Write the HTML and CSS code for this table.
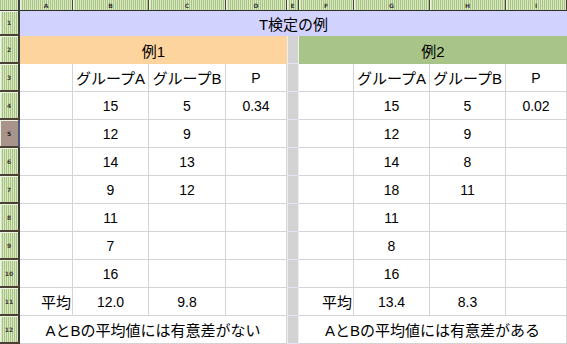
FILE: index.html
```html
<!DOCTYPE html>
<html lang="ja">
<head>
<meta charset="utf-8">
<title>T検定の例</title>
<link rel="stylesheet" href="styles.css">
</head>
<body>
<div class="sheet">
  <div class="corner"></div>
  <div class="ch">A</div><div class="ch">B</div><div class="ch">C</div><div class="ch">D</div><div class="ch ch-e">E</div><div class="ch">F</div><div class="ch">G</div><div class="ch">H</div><div class="ch">I</div>

  <div class="rh">1</div>
  <div class="cell title span9">T検定の例</div>

  <div class="rh">2</div>
  <div class="cell ex1 span4">例1</div>
  <div class="e"></div>
  <div class="cell ex2 span4">例2</div>

  <div class="rh">3</div>
  <div class="cell"></div><div class="cell jp">グループA</div><div class="cell jp">グループB</div><div class="cell">P</div>
  <div class="e"></div>
  <div class="cell"></div><div class="cell jp">グループA</div><div class="cell jp">グループB</div><div class="cell">P</div>

  <div class="rh">4</div>
  <div class="cell"></div><div class="cell">15</div><div class="cell">5</div><div class="cell">0.34</div>
  <div class="e"></div>
  <div class="cell"></div><div class="cell">15</div><div class="cell">5</div><div class="cell">0.02</div>

  <div class="rh rh-sel">5</div>
  <div class="cell"></div><div class="cell">12</div><div class="cell">9</div><div class="cell"></div>
  <div class="e"></div>
  <div class="cell"></div><div class="cell">12</div><div class="cell">9</div><div class="cell"></div>

  <div class="rh">6</div>
  <div class="cell"></div><div class="cell">14</div><div class="cell">13</div><div class="cell"></div>
  <div class="e"></div>
  <div class="cell"></div><div class="cell">14</div><div class="cell">8</div><div class="cell"></div>

  <div class="rh">7</div>
  <div class="cell"></div><div class="cell">9</div><div class="cell">12</div><div class="cell"></div>
  <div class="e"></div>
  <div class="cell"></div><div class="cell">18</div><div class="cell">11</div><div class="cell"></div>

  <div class="rh">8</div>
  <div class="cell"></div><div class="cell">11</div><div class="cell"></div><div class="cell"></div>
  <div class="e"></div>
  <div class="cell"></div><div class="cell">11</div><div class="cell"></div><div class="cell"></div>

  <div class="rh">9</div>
  <div class="cell"></div><div class="cell">7</div><div class="cell"></div><div class="cell"></div>
  <div class="e"></div>
  <div class="cell"></div><div class="cell">8</div><div class="cell"></div><div class="cell"></div>

  <div class="rh">10</div>
  <div class="cell"></div><div class="cell">16</div><div class="cell"></div><div class="cell"></div>
  <div class="e"></div>
  <div class="cell"></div><div class="cell">16</div><div class="cell"></div><div class="cell"></div>

  <div class="rh">11</div>
  <div class="cell jp right">平均</div><div class="cell">12.0</div><div class="cell">9.8</div><div class="cell"></div>
  <div class="e"></div>
  <div class="cell jp right">平均</div><div class="cell">13.4</div><div class="cell">8.3</div><div class="cell"></div>

  <div class="rh">12</div>
  <div class="cell jp span4">AとBの平均値には有意差がない</div>
  <div class="e"></div>
  <div class="cell jp span4">AとBの平均値には有意差がある</div>
</div>
</body>
</html>
```
FILE: styles.css
```css
html, body {
  margin: 0;
  padding: 0;
  background: #ffffff;
}

.sheet {
  display: grid;
  grid-template-columns: 20px 53px 76px 77px 61px 12px 55px 76px 76px 61px;
  grid-template-rows: 11px 25px repeat(11, 28px);
  width: 567px;
  font-family: "Liberation Sans", "Noto Sans CJK JP", sans-serif;
  font-size: 14px;
  color: #000000;
}

.corner,
.ch,
.rh {
  box-sizing: border-box;
  background: repeating-linear-gradient(90deg, #a9c480 0 1px, #d9e8c4 1px 2px);
  display: flex;
  align-items: center;
  justify-content: center;
  font-family: "DejaVu Sans", sans-serif;
  font-size: 6px;
  font-weight: bold;
  color: #3a3a3a;
}

.corner {
  border-right: 2px solid #3c3c3c;
  border-bottom: 1px solid #3c3c3c;
}

.ch {
  border-right: 1px solid #4a4438;
  border-bottom: 1px solid #2e2e2e;
  box-shadow: inset 1px 0 0 #eef4e4;
}

.rh {
  border-right: 2px solid #3c3c3c;
  border-bottom: 2px solid #4a4034;
  box-shadow: inset 1px 1px 0 #eef4e4;
}

.rh-sel {
  background: #a8948a;
  border-right-color: #4a5a78;
  color: #202020;
}

.cell {
  box-sizing: border-box;
  border-right: 1px solid #d4d4d4;
  border-bottom: 1px solid #d4d4d4;
  display: flex;
  align-items: center;
  justify-content: center;
  white-space: nowrap;
  overflow: hidden;
}

.jp {
  font-size: 15px;
}

.right {
  justify-content: flex-end;
  padding-right: 1px;
}

.span4 {
  grid-column: span 4;
}

.span9 {
  grid-column: span 9;
}

.title {
  background: #d2d2fe;
  border: none;
  font-size: 15px;
}

.ex1 {
  background: #fdd49d;
  border: none;
  font-size: 15px;
}

.ex2 {
  background: #a8c488;
  border: none;
  font-size: 15px;
}

.e {
  box-sizing: border-box;
  background: #d3d3d3;
  border-left: 1px solid #eeeeee;
  border-right: 1px solid #eeeeee;
  border-bottom: 1px solid #e4e4f4;
}
```
